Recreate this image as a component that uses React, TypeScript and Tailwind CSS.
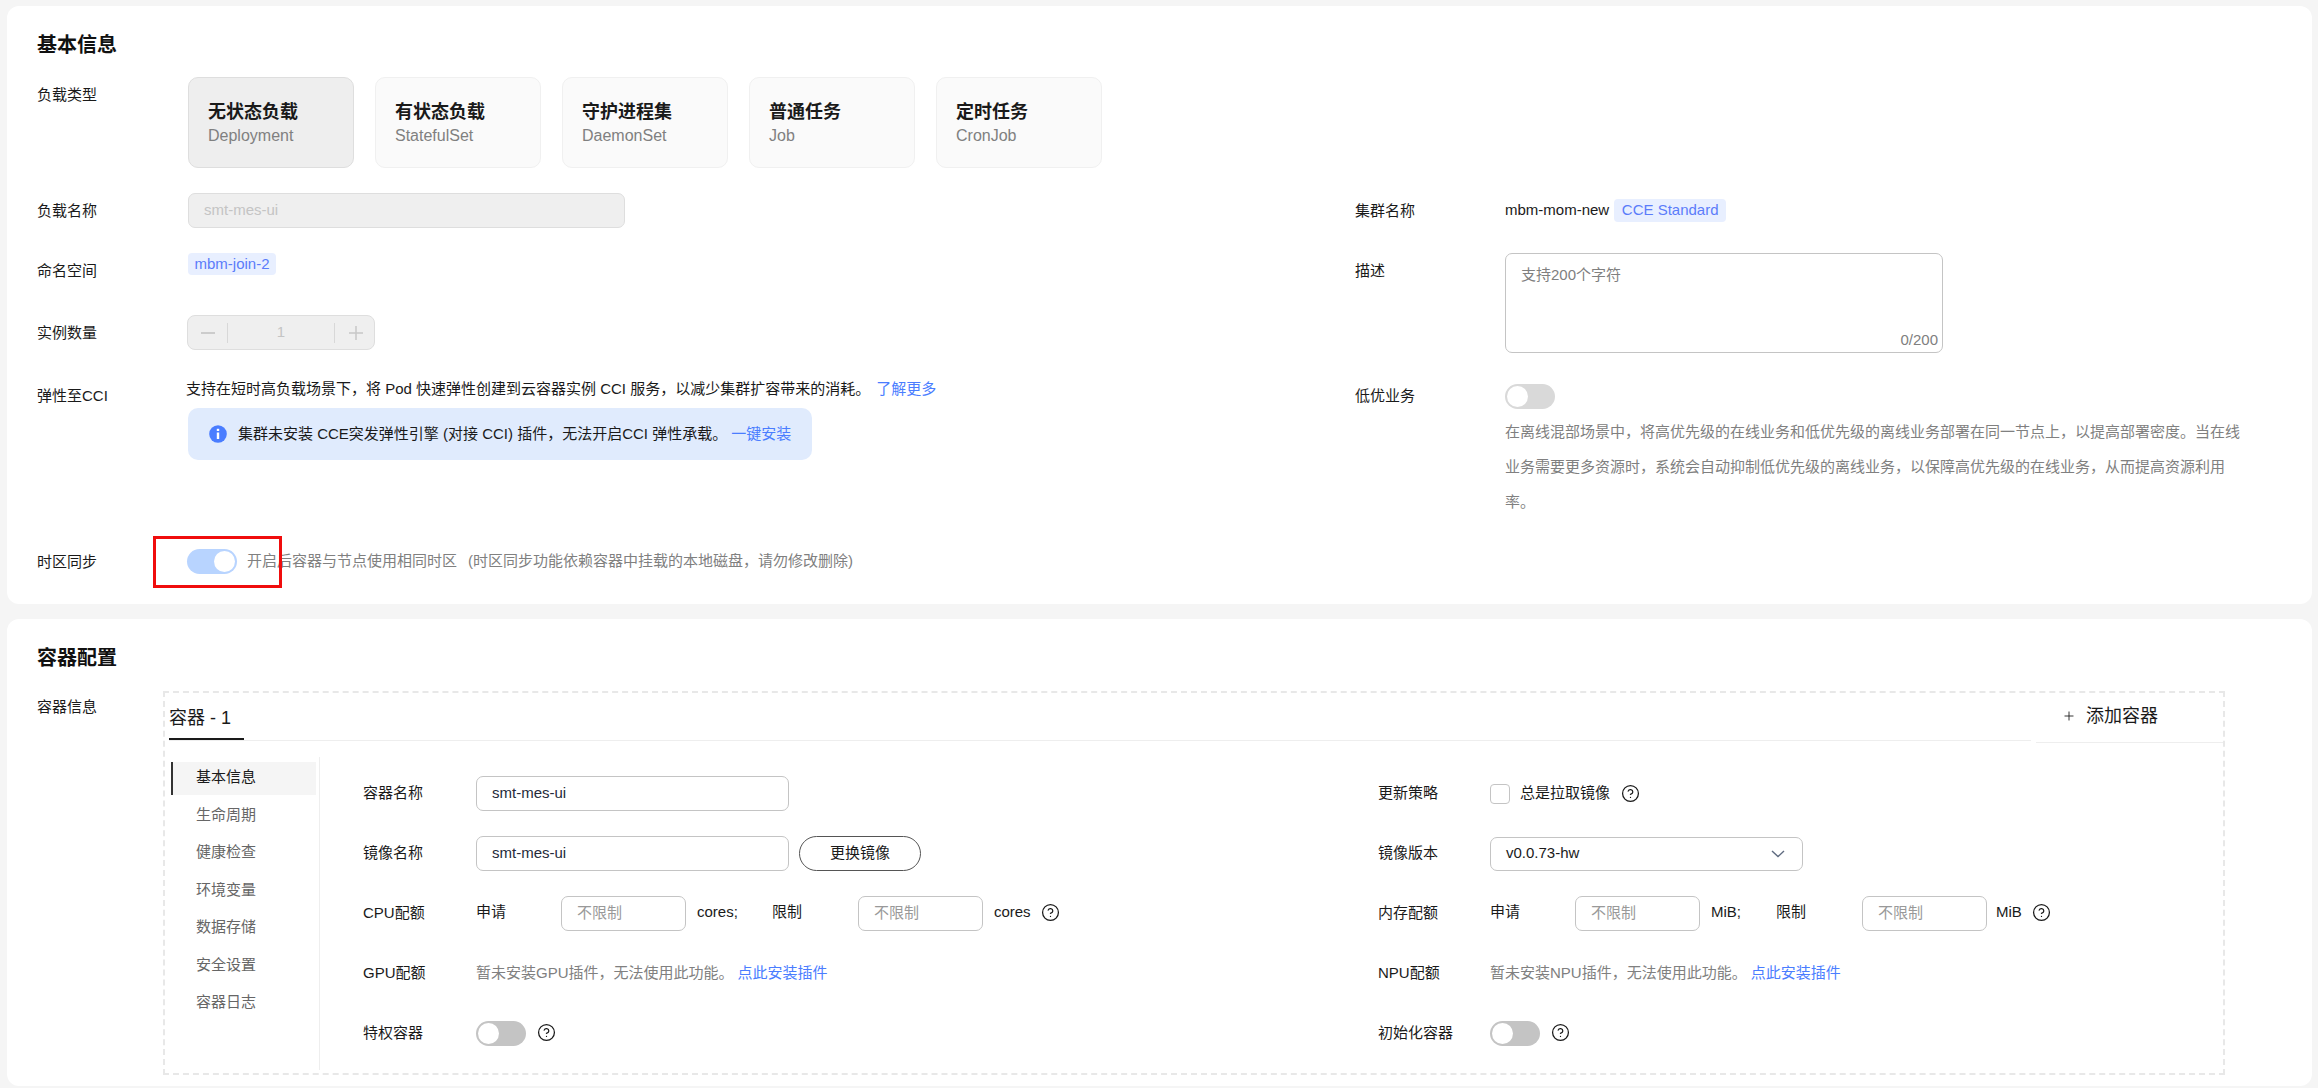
import { CircleHelp, Plus } from "lucide-react";

const tiles = [
  { title: "无状态负载", sub: "Deployment", active: true },
  { title: "有状态负载", sub: "StatefulSet" },
  { title: "守护进程集", sub: "DaemonSet" },
  { title: "普通任务", sub: "Job" },
  { title: "定时任务", sub: "CronJob" },
];

const menu = ["生命周期", "健康检查", "环境变量", "数据存储", "安全设置", "容器日志"];

function Toggle({ on = false, color = "bg-[#d9d9d9]" }: { on?: boolean; color?: string }) {
  return (
    <div className={`flex h-[25px] w-[50px] shrink-0 items-center rounded-full px-[2px] ${color} ${on ? "justify-end" : "justify-start"}`}>
      <div className="h-[21px] w-[21px] rounded-full bg-white" />
    </div>
  );
}

function Help({ className = "" }: { className?: string }) {
  return <CircleHelp size={19} strokeWidth={1.6} className={`shrink-0 text-[#1a1a1a] ${className}`} />;
}

function TextBox({ value, className = "w-[313px]" }: { value: string; className?: string }) {
  return (
    <div className={`flex h-[35px] shrink-0 items-center rounded-[7px] border border-[#c4c4c4] bg-white px-[15px] text-[#252b3a] ${className}`}>
      {value}
    </div>
  );
}

function LimitBox({ className = "" }: { className?: string }) {
  return (
    <div className={`flex h-[35px] w-[125px] shrink-0 items-center rounded-[7px] border border-[#c4c4c4] bg-white px-[15px] text-[#999999] ${className}`}>
      不限制
    </div>
  );
}

function Quota({ unit, gaps }: { unit: string; gaps: { box1: string; unit1: string; limit: string; box2: string; unit2: string } }) {
  return (
    <div className="flex items-start">
      <span className="mt-[5px] leading-[22px]">申请</span>
      <LimitBox className={gaps.box1} />
      <span className={`mt-[5px] leading-[22px] ${gaps.unit1}`}>{unit};</span>
      <span className={`mt-[5px] leading-[22px] ${gaps.limit}`}>限制</span>
      <LimitBox className={gaps.box2} />
      <span className={`mt-[5px] leading-[22px] ${gaps.unit2}`}>{unit}</span>
      <Help className="mt-[7px] ml-[10px]" />
    </div>
  );
}

export default function App() {
  return (
    <div
      className="h-[1088px] w-[2318px] overflow-hidden bg-[#f5f5f5] pt-[6px] pl-[7px] text-[15px] text-[#1a1a1a]"
      style={{ fontFamily: '"Liberation Sans", "Noto Sans CJK SC", sans-serif' }}
    >
      {/* 基本信息 */}
      <section className="h-[598px] w-[2305px] rounded-[12px] bg-white pt-[24px] pl-[30px]">
        <h2 className="h-[30px] text-[20px] leading-[30px] font-bold text-[#111111]">基本信息</h2>
        <div className="mt-[17px] flex">
          <div className="mt-[7px] w-[151px] leading-[22px]">负载类型</div>
          <div className="flex gap-[21px]">
            {tiles.map((t) => (
              <div
                key={t.title}
                className={`flex h-[91px] w-[166px] flex-col rounded-[10px] border pt-[22px] pl-[19px] ${
                  t.active ? "border-[#dedede] bg-[#eeeeee]" : "border-[#f0f0f0] bg-[#fafafa]"
                }`}
              >
                <div className="text-[18px] leading-[24px] font-bold text-[#1a1a1a]">{t.title}</div>
                <div className="mt-[2px] text-[16px] leading-[20px] text-[#808080]">{t.sub}</div>
              </div>
            ))}
          </div>
        </div>

        <div className="mt-[25px] grid grid-cols-[1318px_1fr]">
          <div>
            <div className="flex items-center">
              <div className="w-[151px] leading-[22px]">负载名称</div>
              <div className="flex h-[35px] w-[437px] items-center rounded-[7px] border border-[#dedede] bg-[#efefef] px-[15px] text-[#c4c4c4]">
                smt-mes-ui
              </div>
            </div>
            <div className="mt-[25px] flex h-[22px]">
              <div className="mt-[7px] w-[151px] leading-[22px]">命名空间</div>
              <div className="flex h-[22px] w-[88px] items-center justify-center rounded-[4px] bg-[#e8efff] text-[#5b7cfa]">
                mbm-join-2
              </div>
            </div>
            <div className="mt-[40px] flex items-center">
              <div className="w-[150px] leading-[22px]">实例数量</div>
              <div className="flex h-[35px] w-[188px] items-center rounded-[8px] border border-[#dedede] bg-[#efefef] text-[#c4c4c4]">
                <div className="flex h-[20px] w-[40px] items-center justify-center border-r border-[#d8d8d8]">
                  <div className="h-[2px] w-[14px] bg-[#cccccc]" />
                </div>
                <div className="flex-1 text-center">1</div>
                <div className="flex h-[20px] w-[40px] items-center justify-center border-l border-[#d8d8d8] pl-[2px]">
                  <svg viewBox="0 0 16 16" className="h-[16px] w-[16px]" stroke="#c8c8c8" strokeWidth="1.5">
                    <path d="M1 8h14M8 1v14" />
                  </svg>
                </div>
              </div>
            </div>
            <div className="mt-[28px] flex">
              <div className="mt-[7px] w-[149px] leading-[22px]">弹性至CCI</div>
              <div>
                <div className="leading-[22px]">
                  支持在短时高负载场景下，将 Pod 快速弹性创建到云容器实例 CCI 服务，以减少集群扩容带来的消耗。
                  <span className="ml-[6px] text-[#4a7dff]">了解更多</span>
                </div>
                <div className="mt-[8px] ml-[2px] flex h-[52px] w-[624px] items-center rounded-[10px] bg-[#e0ebfd] pl-[21px]">
                  <svg viewBox="0 0 18 18" className="h-[18px] w-[18px] shrink-0">
                    <circle cx="9" cy="9" r="8.8" fill="#4a7dff" />
                    <rect x="7.8" y="7.5" width="2.4" height="6.5" fill="#ffffff" />
                    <rect x="7.8" y="3.8" width="2.4" height="2.2" fill="#ffffff" />
                  </svg>
                  <span className="ml-[11px]">集群未安装 CCE突发弹性引擎 (对接 CCI) 插件，无法开启CCI 弹性承载。</span>
                  <span className="ml-[4px] text-[#4a7dff]">一键安装</span>
                </div>
              </div>
            </div>
            <div className="mt-[89px] flex items-center">
              <div className="w-[150px] leading-[22px]">时区同步</div>
              <div className="relative">
                <Toggle on color="bg-[#b8d4ff]" />
                <div className="absolute -top-[13px] -left-[34px] h-[52px] w-[129px] border-[3px] border-[#f00d0d]" />
              </div>
              <span className="ml-[10px] text-[#808080]">开启后容器与节点使用相同时区</span>
              <span className="ml-[11px] text-[#808080]">(时区同步功能依赖容器中挂载的本地磁盘，请勿修改删除)</span>
            </div>
          </div>

          <div>
            <div className="mt-[6px] flex items-center">
              <div className="w-[150px] leading-[22px]">集群名称</div>
              <span>mbm-mom-new</span>
              <span className="ml-[5px] flex h-[23px] w-[112px] items-center justify-center rounded-[4px] bg-[#e8efff] text-[#5b7cfa]">
                CCE Standard
              </span>
            </div>
            <div className="mt-[31px] flex">
              <div className="mt-[7px] w-[150px] leading-[22px]">描述</div>
              <div className="relative h-[100px] w-[438px] rounded-[7px] border border-[#c4c4c4] pt-[10px] pl-[15px] leading-[22px] text-[#808080]">
                支持200个字符
                <span className="absolute right-[4px] bottom-[1px] text-[#808080]">0/200</span>
              </div>
            </div>
            <div className="mt-[31px] flex">
              <div className="mt-[1px] w-[150px] leading-[22px]">低优业务</div>
              <div>
                <Toggle />
                <div className="mt-[5px] w-[740px] leading-[35px] text-[#808080]">
                  在离线混部场景中，将高优先级的在线业务和低优先级的离线业务部署在同一节点上，以提高部署密度。当在线业务需要更多资源时，系统会自动抑制低优先级的离线业务，以保障高优先级的在线业务，从而提高资源利用率。
                </div>
              </div>
            </div>
          </div>
        </div>
      </section>

      {/* 容器配置 */}
      <section className="mt-[15px] h-[467px] w-[2305px] rounded-[12px] bg-white pt-[24px] pl-[30px]">
        <h2 className="h-[30px] text-[20px] leading-[30px] font-bold text-[#111111]">容器配置</h2>
        <div className="mt-[18px] flex">
          <div className="mt-[5px] w-[126px] leading-[22px]">容器信息</div>
          <div className="h-[384px] w-[2062px] border-2 border-dashed border-[#e8e8e8]">
            <div className="flex items-start">
              <div className="ml-[4px] h-[48px] flex-1 border-b border-[#eeeeee]">
                <div className="flex h-[47px] w-[75px] border-b-2 border-[#1a1a1a] pt-[12px] text-[18px] leading-[26px]">容器 - 1</div>
              </div>
              <div className="ml-[5px] flex h-[50px] w-[187px] items-center border-b border-[#eeeeee] pb-[3px] pl-[26px] text-[18px]">
                <Plus size={14} strokeWidth={1.5} />
                <span className="ml-[10px]">添加容器</span>
              </div>
            </div>

            <div className="mt-[14px] ml-[6px] flex">
              <div className="h-[313px] w-[149px] shrink-0 border-r border-[#eeeeee] pt-[5px]">
                <div className="mb-[1px] flex h-[33px] w-[145px] items-center border-l-2 border-[#333333] bg-[#f5f5f5] pb-[2px] pl-[23px]">基本信息</div>
                {menu.map((m) => (
                  <div key={m} className="flex h-[37.5px] items-center pl-[25px] text-[#666666]">
                    {m}
                  </div>
                ))}
              </div>

              <div className="grid flex-1 grid-cols-[1015px_1fr] auto-rows-[35px] gap-y-[25px] pt-[19px] pl-[43px]">
                <div className="flex items-center">
                  <div className="w-[113px]">容器名称</div>
                  <TextBox value="smt-mes-ui" />
                </div>
                <div className="flex items-center">
                  <div className="w-[112px]">更新策略</div>
                  <div className="h-[20px] w-[20px] rounded-[4px] border border-[#c4c4c4]" />
                  <span className="ml-[10px]">总是拉取镜像</span>
                  <Help className="ml-[11px]" />
                </div>

                <div className="flex items-center">
                  <div className="w-[113px]">镜像名称</div>
                  <TextBox value="smt-mes-ui" />
                  <div className="ml-[10px] flex h-[35px] w-[122px] items-center justify-center rounded-full border border-[#555555]">更换镜像</div>
                </div>
                <div className="flex items-center">
                  <div className="w-[112px]">镜像版本</div>
                  <div className="flex h-[34px] w-[313px] items-center justify-between rounded-[7px] border border-[#c4c4c4] pr-[17px] pl-[15px]">
                    v0.0.73-hw
                    <svg viewBox="0 0 14 8" fill="none" className="h-[8px] w-[14px]" stroke="#5f6b80" strokeWidth="1.4">
                      <path d="M1 1l6 5.6L13 1" />
                    </svg>
                  </div>
                </div>

                <div className="flex items-center">
                  <div className="w-[113px]">CPU配额</div>
                  <Quota
                    unit="cores"
                    gaps={{ box1: "ml-[55px]", unit1: "ml-[11px]", limit: "ml-[34px]", box2: "ml-[56px]", unit2: "ml-[11px]" }}
                  />
                </div>
                <div className="flex items-center">
                  <div className="w-[112px]">内存配额</div>
                  <Quota
                    unit="MiB"
                    gaps={{ box1: "ml-[55px]", unit1: "ml-[11px]", limit: "ml-[35px]", box2: "ml-[56px]", unit2: "ml-[9px]" }}
                  />
                </div>

                <div className="flex items-center">
                  <div className="w-[113px]">GPU配额</div>
                  <span className="text-[#808080]">暂未安装GPU插件，无法使用此功能。</span>
                  <span className="ml-[4px] text-[#4a7dff]">点此安装插件</span>
                </div>
                <div className="flex items-center">
                  <div className="w-[112px]">NPU配额</div>
                  <span className="text-[#808080]">暂未安装NPU插件，无法使用此功能。</span>
                  <span className="ml-[4px] text-[#4a7dff]">点此安装插件</span>
                </div>

                <div className="flex items-center">
                  <div className="w-[113px]">特权容器</div>
                  <Toggle color="bg-[#c4c4c4]" />
                  <Help className="mb-[3px] ml-[11px]" />
                </div>
                <div className="flex items-center">
                  <div className="w-[112px]">初始化容器</div>
                  <Toggle color="bg-[#c4c4c4]" />
                  <Help className="mb-[3px] ml-[11px]" />
                </div>
              </div>
            </div>
          </div>
        </div>
      </section>
    </div>
  );
}
